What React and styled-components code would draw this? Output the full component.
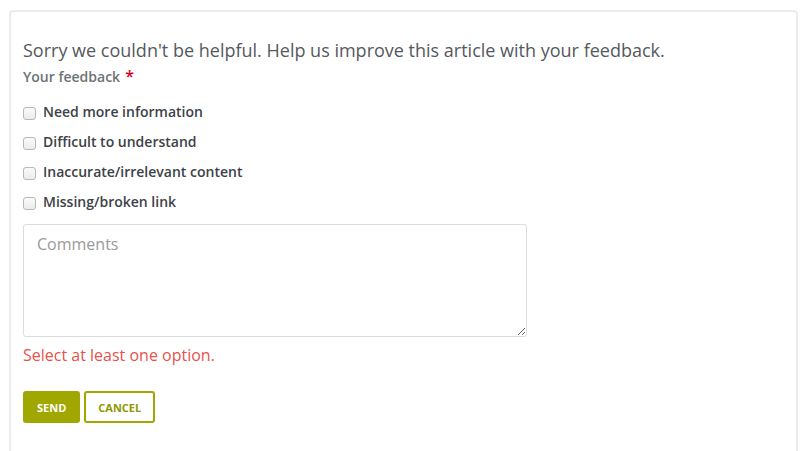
import React from "react";
import styled, { createGlobalStyle } from "styled-components";

const GlobalStyle = createGlobalStyle`
  html, body {
    margin: 0;
    padding: 0;
    background: #ffffff;
  }
  body {
    font-family: "Open Sans", "Liberation Sans", sans-serif;
  }
`;

const Card = styled.div`
  margin: 10px 10px 0 9px;
  min-height: calc(100vh - 10px);
  box-sizing: border-box;
  border: 2px solid #ececec;
  border-bottom: none;
  border-radius: 4px 4px 0 0;
  padding: 26px 12px 0 12px;
`;

const Title = styled.h2`
  margin: 0;
  font-size: 18px;
  font-weight: 400;
  line-height: 24px;
  color: #55595e;
`;

const Label = styled.div`
  margin-top: 4px;
  font-size: 14px;
  font-weight: 600;
  line-height: 20px;
  color: #6c7378;
`;

const Required = styled.span`
  color: #d0021b;
  margin-left: 5px;
  font-size: 16px;
`;

const Options = styled.div`
  display: flex;
  flex-direction: column;
  gap: 10px;
  margin-top: 14px;
`;

const Option = styled.label`
  display: flex;
  align-items: center;
  gap: 7px;
  height: 20px;
  font-size: 14px;
  font-weight: 600;
  color: #3d4247;
`;

const Box = styled.input.attrs({ type: "checkbox" })`
  appearance: none;
  margin: 5px 0 0 0;
  width: 13px;
  height: 13px;
  border: 1px solid #b8b8b8;
  border-radius: 3px;
  background: linear-gradient(#fafafa, #ececec);
`;

const Comments = styled.textarea`
  display: block;
  margin-top: 13px;
  width: 504px;
  height: 113px;
  box-sizing: border-box;
  border: 1px solid #dcdcdc;
  border-radius: 3px;
  padding: 8px 13px;
  font-family: inherit;
  font-size: 16px;
  color: #444;
  &::placeholder {
    color: #9a9a9a;
  }
`;

const Error = styled.div`
  margin-top: 6px;
  font-size: 16px;
  line-height: 24px;
  color: #e5534b;
`;

const Actions = styled.div`
  display: flex;
  gap: 4px;
  margin-top: 24px;
`;

const Button = styled.button`
  height: 32px;
  box-sizing: border-box;
  padding: 0 12px;
  border: 2px solid #9fa700;
  border-radius: 3px;
  background: ${(p) => (p.$outline ? "#ffffff" : "#9fa700")};
  color: ${(p) => (p.$outline ? "#8f9700" : "#ffffff")};
  font-family: inherit;
  font-size: 11px;
  font-weight: 700;
  text-transform: uppercase;
  cursor: pointer;
`;

const options = [
  "Need more information",
  "Difficult to understand",
  "Inaccurate/irrelevant content",
  "Missing/broken link",
];

export default function App() {
  return (
    <>
      <GlobalStyle />
      <Card>
        <Title>
          Sorry we couldn't be helpful. Help us improve this article with your
          feedback.
        </Title>
        <Label>
          Your feedback<Required>*</Required>
        </Label>
        <Options>
          {options.map((o) => (
            <Option key={o}>
              <Box />
              {o}
            </Option>
          ))}
        </Options>
        <Comments placeholder="Comments" />
        <Error>Select at least one option.</Error>
        <Actions>
          <Button>Send</Button>
          <Button $outline>Cancel</Button>
        </Actions>
      </Card>
    </>
  );
}
